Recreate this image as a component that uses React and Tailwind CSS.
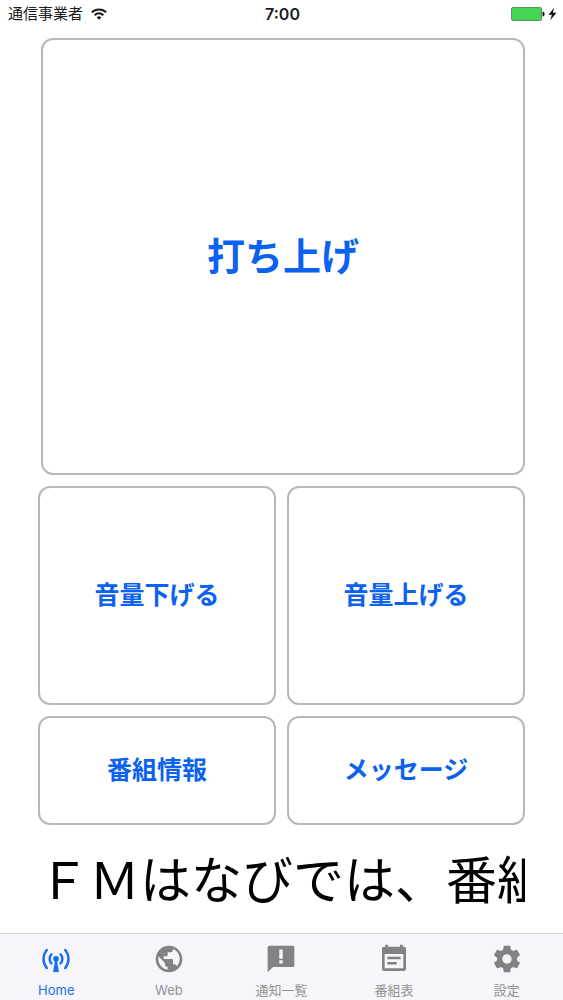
import React, { useState } from 'react';

function AntennaIcon({ className }) {
  return (
    <svg className={className} viewBox="0 0 32 32" fill="none" stroke="currentColor" strokeWidth="2.4" strokeLinecap="round">
      <path d="M11.4 11.4a6.6 6.6 0 0 0 0 9M20.6 11.4a6.6 6.6 0 0 1 0 9" />
      <path d="M6.8 7a14 14 0 0 0 0 18M25.2 7a14 14 0 0 1 0 18" />
      <circle cx="16" cy="15.8" r="2.9" fill="currentColor" stroke="none" />
      <path d="M15.1 17h1.8l2 12h-5.8z" fill="currentColor" stroke="none" />
    </svg>
  );
}

function GlobeIcon({ className }) {
  return (
    <svg className={className} viewBox="0 0 24 24" fill="currentColor">
      <path d="M12 2C6.48 2 2 6.48 2 12s4.48 10 10 10 10-4.48 10-10S17.52 2 12 2zm-1 17.93c-3.95-.49-7-3.85-7-7.93 0-.62.08-1.21.21-1.79L9 15v1c0 1.1.9 2 2 2v1.93zm6.9-2.54c-.26-.81-1-1.39-1.9-1.39h-1v-3c0-.55-.45-1-1-1H8v-2h2c.55 0 1-.45 1-1V7h2c1.1 0 2-.9 2-2v-.41c2.93 1.19 5 4.06 5 7.41 0 2.08-.8 3.97-2.1 5.39z" />
    </svg>
  );
}

function NoticeIcon({ className }) {
  return (
    <svg className={className} viewBox="0 0 24 24" fill="currentColor" fillRule="evenodd">
      <path d="M20.8 2H3.2C2.5 2 2 2.5 2 3.2V22l4-4h14.800c.7 0 1.200-.5 1.200-1.200V3.200C22 2.500 21.500 2 20.800 2zM10.700 4.800h2.600v7h-2.600zM10.700 12.900h2.600v2.400h-2.600z" />
    </svg>
  );
}

function ScheduleIcon({ className }) {
  return (
    <svg className={className} viewBox="0 0 24 24" fill="currentColor" fillRule="evenodd">
      <path d="M19.500 2.800H18.500V1.300h-2v1.500h-9V1.300h-2v1.500h-1C3.600 2.800 3 3.500 3 4.400v15c0 .9.600 1.600 1.500 1.600h15c.9 0 1.500-.7 1.500-1.600v-15c0-.9-.6-1.600-1.500-1.600zM5 8.200h14V19H5z" />
      <path d="M7 10.300h10v1.900H7zM7 14.300h7v1.900H7z" />
    </svg>
  );
}

function GearIcon({ className }) {
  return (
    <svg className={className} viewBox="0 0 24 24" fill="currentColor">
      <path d="M19.43 12.98c.04-.32.07-.64.07-.98s-.03-.66-.07-.98l2.11-1.65c.19-.15.24-.42.12-.64l-2-3.46c-.12-.22-.39-.3-.61-.22l-2.490 1c-.52-.4-1.080-.73-1.690-.98l-.38-2.650C14.460 2.180 14.250 2 14 2h-4c-.25 0-.46.18-.49.42l-.38 2.650c-.61.25-1.170.59-1.690.98l-2.490-1c-.23-.09-.49 0-.61.22l-2 3.460c-.13.22-.07.49.12.64l2.110 1.650c-.04.32-.07.65-.07.98s.03.66.07.98l-2.110 1.650c-.19.15-.24.42-.12.64l2 3.460c.12.22.39.3.61.22l2.490-1c.52.4 1.080.73 1.690.98l.38 2.650c.03.24.24.42.49.42h4c.25 0 .46-.18.49-.42l.38-2.650c.61-.25 1.170-.59 1.690-.98l2.490 1c.23.09.49 0 .61-.22l2-3.460c.12-.22.07-.49-.12-.64l-2.110-1.650zM12 15.500c-1.930 0-3.500-1.570-3.500-3.500s1.570-3.500 3.500-3.500 3.500 1.570 3.500 3.500-1.570 3.500-3.500 3.500z" />
    </svg>
  );
}

function WifiIcon() {
  return (
    <svg className="h-3 w-4" viewBox="0 0 16 12" fill="none" stroke="currentColor" strokeWidth="2">
      <path d="M0.8 4.4a10.2 10.2 0 0 1 14.4 0" />
      <path d="M3.6 7.2a6.2 6.2 0 0 1 8.8 0" />
      <path d="M8 11.8L5.7 9.4a3.2 3.2 0 0 1 4.6 0z" fill="currentColor" stroke="none" />
    </svg>
  );
}

function BatteryIcon() {
  return (
    <svg className="h-[14px] w-[46px]" viewBox="0 0 46 14">
      <rect x="0.5" y="0.5" width="30" height="13" rx="1.5" fill="#43d551" stroke="#5f8f63" />
      <path d="M31.500 4.500c2.800 0 2.800 5 0 5z" fill="#111" />
      <path d="M43.200 0.800l-5.700 7h3.400L39.200 13.200l6.300-7.400h-3.700z" fill="#111" />
    </svg>
  );
}

const tabs = [
  { id: 'home', label: 'Home', icon: AntennaIcon },
  { id: 'web', label: 'Web', icon: GlobeIcon },
  { id: 'notifications', label: '通知一覧', icon: NoticeIcon },
  { id: 'programs', label: '番組表', icon: ScheduleIcon },
  { id: 'settings', label: '設定', icon: GearIcon },
];

const smallButtons = [
  { id: 'volume-down', label: '音量下げる' },
  { id: 'volume-up', label: '音量上げる' },
  { id: 'program-info', label: '番組情報' },
  { id: 'message', label: 'メッセージ' },
];

export default function App() {
  const [activeTab, setActiveTab] = useState('home');

  return (
    <div className="min-h-screen flex flex-col bg-white text-black font-['Inter','Noto_Sans_CJK_JP',sans-serif]">
      {/* Status bar */}
      <header className="grid grid-cols-3 items-center h-7 pl-2 pr-1.5 text-[#1c1c1c]">
        <div className="flex items-center gap-2 text-[15px] leading-5">
          <span>通信事業者</span>
          <WifiIcon />
        </div>
        <time className="text-center text-[16px] leading-5 font-semibold">7:00</time>
        <div className="flex justify-end">
          <BatteryIcon />
        </div>
      </header>

      {/* Remote buttons */}
      <main className="flex-1 flex flex-col px-[38px] pt-[10px]">
        <div className="flex-1 grid grid-cols-2 grid-rows-[4fr_2fr_1fr] gap-[11px] text-[#0b62f0]">
          <button className="col-span-2 ml-[3px] border-2 border-[#bab7ba] rounded-xl text-[38px] font-bold cursor-pointer">
            打ち上げ
          </button>
          {smallButtons.map((button) => (
            <button
              key={button.id}
              className="border-2 border-[#bab7ba] rounded-xl text-[25px] font-bold cursor-pointer"
            >
              {button.label}
            </button>
          ))}
        </div>

        {/* News ticker */}
        <p className="h-[108px] overflow-hidden whitespace-nowrap font-['Noto_Sans_CJK_JP',sans-serif] text-[51px] leading-[104px]">
          ＦＭはなびでは、番組
        </p>
      </main>

      {/* Tab bar */}
      <nav className="grid grid-cols-5 h-[67px] border-t border-[#d3d1d6] bg-[#f6f5f9]">
        {tabs.map(({ id, label, icon: Icon }) => (
          <button
            key={id}
            onClick={() => setActiveTab(id)}
            className={`flex flex-col items-center pt-[9px] gap-[5px] cursor-pointer ${
              activeTab === id ? 'text-[#1a6df0]' : 'text-[#848184]'
            }`}
          >
            <Icon className="size-8" />
            <span className={`text-[13px] leading-5 ${activeTab === id ? '' : 'text-[#929195]'}`}>{label}</span>
          </button>
        ))}
      </nav>
    </div>
  );
}
